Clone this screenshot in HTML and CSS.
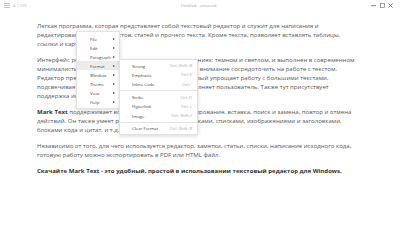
FILE: index.html
```html
<!DOCTYPE html>
<html lang="ru">
<head>
<meta charset="utf-8">
<title>Mark Text</title>
<link rel="stylesheet" href="styles.css">
</head>
<body>
<div class="window">
  <header class="titlebar">
    <div class="tb-left">
      <svg class="burger" width="6" height="5" viewBox="0 0 6 5"><path d="M0 0.5H6M0 2.5H6M0 4.5H6" stroke="#b5b5b5" stroke-width="0.8"/></svg>
      <span class="words">A 1109</span>
    </div>
    <div class="tb-title">Untitled - unsaved</div>
    <div class="tb-controls">
      <svg width="5" height="5" viewBox="0 0 5 5"><path d="M0 2.7H5" stroke="#666" stroke-width="0.8"/></svg>
      <svg width="5" height="5" viewBox="0 0 5 5"><rect x="0.4" y="0.4" width="4.2" height="4.2" fill="none" stroke="#777" stroke-width="0.7"/></svg>
      <svg width="5" height="5" viewBox="0 0 5 5"><path d="M0.4 0.4L4.6 4.6M4.6 0.4L0.4 4.6" stroke="#666" stroke-width="0.8"/></svg>
    </div>
  </header>
  <main class="editor">
    <p>Легкая программа, которая представляет собой текстовый редактор и служит для написания и редактирования любых текстов, статей и прочего текста. Кроме текста, позволяет вставлять таблицы, ссылки и картинки.</p>
    <p>Интерфейс редактора доступен в двух цветовых решениях: темном и светлом, и выполнен в современном минималистичном стиле, который позволяет все своё внимание сосредоточить на работе с текстом. Редактор предлагает режим печатной машинки, который упрощает работу с большими текстами, подсвечивая текущий абзац или строку, которую заполняет пользователь. Также тут присутствует поддержка исходного кода.</p>
    <p><strong>Mark Text</strong> поддерживает все основные функции: копирование, вставка, поиск и замена, повтор и отмена действий. Он также умеет работать с таблицами, ссылками, списками, изображениями и заголовками, блоками кода и цитат, и т.д.</p>
    <p>Независимо от того, для чего используется редактор, заметки, статьи, списки, написание исходного кода, готовую работу можно экспортировать в PDF или HTML файл.</p>
    <p><strong>Скачайте Mark Text - это удобный, простой в использовании текстовый редактор для Windows.</strong></p>
  </main>

  <ul class="menu ctx">
    <li class="item"><span>File</span><i class="arr"></i></li>
    <li class="item"><span>Edit</span><i class="arr"></i></li>
    <li class="item"><span>Paragraph</span><i class="arr"></i></li>
    <li class="item active"><span>Format</span><i class="arr"></i></li>
    <li class="item"><span>Window</span><i class="arr"></i></li>
    <li class="item"><span>Theme</span><i class="arr"></i></li>
    <li class="item"><span>View</span><i class="arr"></i></li>
    <li class="item"><span>Help</span><i class="arr"></i></li>
  </ul>

  <ul class="menu sub">
    <li class="item"><span>Strong</span><kbd>Ctrl+Shift+B</kbd></li>
    <li class="item"><span>Emphasis</span><kbd>Ctrl+E</kbd></li>
    <li class="item"><span>Inline Code</span><kbd>Ctrl+`</kbd></li>
    <li class="sep"></li>
    <li class="item"><span>Strike</span><kbd>Ctrl+D</kbd></li>
    <li class="item"><span>Hyperlink</span><kbd>Ctrl+L</kbd></li>
    <li class="item"><span>Image</span><kbd>Ctrl+Shift+I</kbd></li>
    <li class="sep"></li>
    <li class="item"><span>Clear Format</span><kbd>Ctrl+Shift+R</kbd></li>
  </ul>
</div>
</body>
</html>
```

FILE: styles.css
```css
* { box-sizing: border-box; }
html, body { margin: 0; padding: 0; background: #fff; }
body { width: 400px; height: 243px; overflow: hidden; font-family: "Open Sans", "Liberation Sans", sans-serif; }

.window { position: relative; width: 400px; height: 243px; background: #fff; }

.titlebar {
  height: 10px;
  display: grid;
  grid-template-columns: 1fr auto 1fr;
  align-items: center;
  padding: 0 7px 0 4px;
  font-size: 4.2px;
  color: #bdbdbd;
}
.tb-left { display: flex; align-items: center; gap: 3px; }
.burger { display: block; }
.tb-title { color: #a8a8a8; }
.tb-controls { display: flex; justify-content: flex-end; gap: 3.5px; }
.tb-controls svg { display: block; }

.editor {
  padding: 11.5px 40px 0 37px;
  font-size: 6.05px;
  line-height: 9px;
  color: #555;
}
.editor p { margin: 0 0 7px; }
.editor strong { color: #333; font-weight: 700; }

.menu {
  position: absolute;
  margin: 0;
  list-style: none;
  background: #fff;
  border: 0.5px solid #e2e2e2;
  box-shadow: 0 1px 4px rgba(0,0,0,0.16);
  font-size: 4.3px;
  color: #444;
}
.menu .item { display: flex; align-items: center; justify-content: space-between; }

.ctx { left: 76px; top: 31px; width: 44px; padding: 2px 0; }
.ctx .item { height: 9px; padding: 0 4px 0 13px; }
.ctx .active { background: #ececec; }
.arr { width: 0; height: 0; border-left: 2px solid #444; border-top: 1.3px solid transparent; border-bottom: 1.3px solid transparent; }

.sub { left: 119px; top: 59px; width: 79px; padding: 1px 0; }
.sub .item { height: 9.3px; padding: 0 5px 0 12px; }
.sub kbd { font-family: inherit; font-size: 4px; color: #a5a5a5; }
.sep { height: 3.5px; display: flex; align-items: center; }
.sep::after { content: ""; display: block; width: 100%; height: 0.5px; background: #e4e4e4; }
```
